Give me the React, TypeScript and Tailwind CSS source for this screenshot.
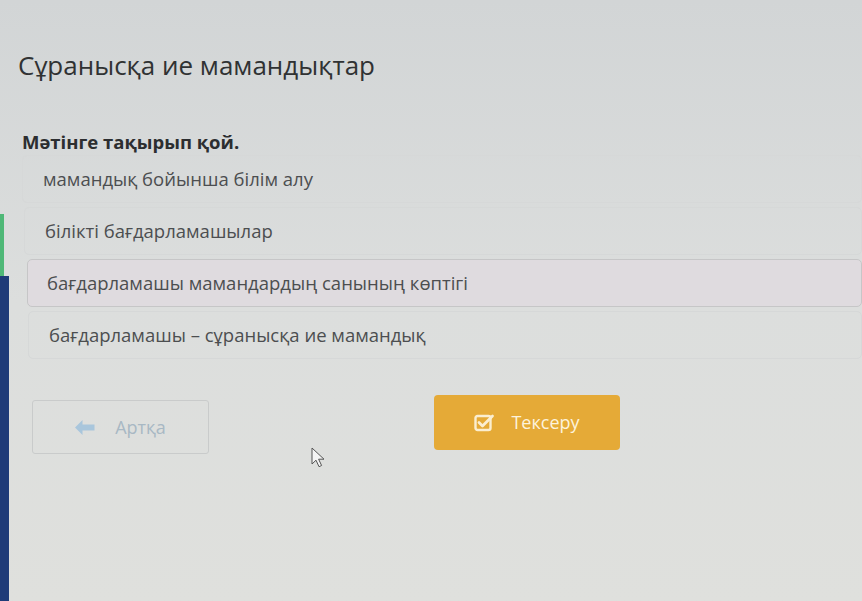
const options = [
  "мамандық бойынша білім алу",
  "білікті бағдарламашылар",
  "бағдарламашы мамандардың санының көптігі",
  "бағдарламашы – сұранысқа ие мамандық",
];

function CheckSquare() {
  return (
    <svg width="21" height="19" viewBox="0 0 21 19" fill="none">
      <rect x="1.5" y="3" width="15" height="14" rx="2" stroke="#fbeed0" strokeWidth="2.4" />
      <path d="M5 9.5l3.5 3.5 10-10" stroke="#fbeed0" strokeWidth="2.8" strokeLinecap="round" strokeLinejoin="round" />
    </svg>
  );
}

function ArrowLeft() {
  return (
    <svg width="20" height="15" viewBox="0 0 20 15" fill="#a9c6dc">
      <path d="M0 7.5L7.5 0v4.5h12v6h-12V15z" />
    </svg>
  );
}

function Pointer() {
  return (
    <svg width="16" height="22" viewBox="0 0 16 22" fill="#f4f4f4" stroke="#555" strokeWidth="1">
      <path d="M1 1v16l4-3.8 3 6.5 2.6-1.2-3-6.3H13z" />
    </svg>
  );
}

export default function App() {
  return (
    <div
      className="relative flex h-[601px] w-[862px] overflow-hidden bg-linear-to-b from-[#d2d5d6] via-[#dcdedd] to-[#dfe0dd]"
      style={{ fontFamily: '"Open Sans", "Noto Sans", sans-serif' }}
    >
      <div className="flex w-[9px] shrink-0 flex-col">
        <div className="h-[214px]" />
        <div className="h-[62px] w-[4px] bg-[#4fb877]" />
        <div className="flex-1 bg-[#1f3b78]" />
      </div>

      <div className="flex-1">
        <h1 className="ml-[9px] mt-[46px] text-[26px] leading-[38px] text-[#303233]">
          Сұранысқа ие мамандықтар
        </h1>

        <div className="ml-[13px] mt-[46px] text-[18.5px] font-bold leading-[24px] text-[#2c2e30]">
          Мәтінге тақырып қой.
        </div>

        <div className="ml-[13px] mt-[1px] flex flex-col gap-[4px]">
          {options.map((o, i) => (
            <div
              key={o}
              className={
                i === 2
                  ? "flex h-[48px] items-center rounded-[5px] border border-[#c6c6c7] bg-[#dfdbdf] pl-[19px] text-[18.5px] text-[#4c4e50]"
                  : "flex h-[48px] items-center rounded-[5px] border border-[#d6d8d8] pl-[20px] text-[18.5px] text-[#4c4e50]"
              }
              style={{ marginLeft: i === 2 ? 5 : i === 3 ? 6 : i === 1 ? 2 : 0 }}
            >
              {o}
            </div>
          ))}
        </div>

        <div className="ml-[23px] mt-[36px] flex items-start gap-[225px]">
          <button className="mt-[5px] flex h-[54px] w-[177px] items-center justify-center gap-[20px] rounded-[3px] border border-[#c9cbcb] text-[18px] text-[#a8b8c4]">
            <ArrowLeft />
            Артқа
          </button>
          <button className="flex h-[55px] w-[186px] items-center justify-center gap-[16px] rounded-[4px] bg-[#e5aa37] text-[18px] text-[#fdf3dc]">
            <CheckSquare />
            Тексеру
          </button>
        </div>
      </div>

      <div className="absolute left-[311px] top-[447px]">
        <Pointer />
      </div>
    </div>
  );
}
